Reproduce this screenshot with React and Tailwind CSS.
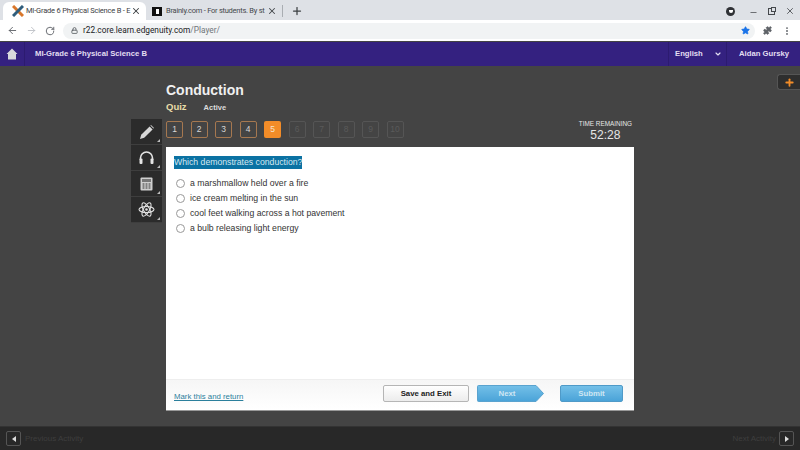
import { ChevronDown, Plus, X, ArrowLeft, ArrowRight, RotateCw, Lock, Star, Puzzle, MoreVertical, Minus } from "lucide-react";

const answers = [
  "a marshmallow held over a fire",
  "ice cream melting in the sun",
  "cool feet walking across a hot pavement",
  "a bulb releasing light energy",
];

function EdgeLogo() {
  return (
    <svg width="12" height="12" viewBox="0 0 12 12" className="mr-[2px] shrink-0">
      <path d="M1 1l10 10" stroke="#d9772b" strokeWidth="3" />
      <path d="M11 1L1 11" stroke="#2f5d7c" strokeWidth="3" />
    </svg>
  );
}

function BrowserBar() {
  return (
    <div className="font-['Roboto',sans-serif]">
      <div className="flex h-[20px] items-end bg-[#dee1e6] pl-[3px]">
        <div className="flex h-[18px] w-[143px] items-center rounded-t-[6px] bg-white pl-[9px] pr-[5px] text-[#3c4043]">
          <EdgeLogo />
          <span className="min-w-0 flex-1 whitespace-nowrap text-[7.5px] tracking-[-0.2px]">MI-Grade 6 Physical Science B - E</span>
          <X size={10} strokeWidth={2.5} className="shrink-0" />
        </div>
        <div className="flex h-[18px] w-[136px] items-center pl-[6px] pr-[5px] text-[#45484c]">
          <div className="mr-[4px] flex h-[9px] w-[10px] shrink-0 items-center justify-center bg-[#111111]">
            <div className="h-[5px] w-[3px] bg-white" />
          </div>
          <span className="min-w-0 flex-1 whitespace-nowrap text-[7.5px] tracking-[-0.25px]">Brainly.com - For students. By st</span>
          <X size={10} strokeWidth={2.5} className="shrink-0" />
        </div>
        <div className="mb-[3px] h-[12px] w-px bg-[#a9adb2]" />
        <Plus size={12} strokeWidth={2.5} className="mb-[3px] ml-[8px] text-[#3c4043]" />
        <div className="mb-[3px] ml-auto flex items-center text-[#45484c]">
          <div className="flex h-[9px] w-[9px] items-center justify-center rounded-full bg-[#303236]">
            <div className="h-[3px] w-[4px] rounded-b-full bg-white" />
          </div>
          <Minus size={9} strokeWidth={2} className="ml-[14px] mt-[3px]" />
          <div className="relative ml-[10px] h-[7px] w-[7px] border border-[#45484c]">
            <div className="absolute -right-[2px] -top-[2px] h-[5px] w-[5px] border border-[#45484c] bg-[#dee1e6]" />
          </div>
          <X size={10} strokeWidth={2} className="ml-[10px] mr-[5px]" />
        </div>
      </div>
      <div className="flex h-[21px] items-center bg-white">
        <ArrowLeft size={11} strokeWidth={2} className="ml-[7px] text-[#5f6368]" />
        <ArrowRight size={11} strokeWidth={2} className="ml-[8px] text-[#bdc1c6]" />
        <RotateCw size={10} strokeWidth={2.2} className="ml-[8px] text-[#5f6368]" />
        <div className="ml-[8px] flex h-[16px] w-[692px] items-center rounded-full bg-[#f1f3f4] pl-[8px] pr-[5px]">
          <Lock size={7} strokeWidth={3} className="text-[#5f6368]" />
          <span className="ml-[5px] text-[8.3px] leading-none text-[#202124]">
            r22.core.learn.edgenuity.com<span className="text-[#70757a]">/Player/</span>
          </span>
          <Star size={9} fill="#1a73e8" strokeWidth={2} className="ml-auto text-[#1a73e8]" />
        </div>
        <Puzzle size={9} fill="#5f6368" strokeWidth={2} className="ml-[8px] text-[#5f6368]" />
        <MoreVertical size={10} strokeWidth={2.5} className="ml-[10px] text-[#5f6368]" />
      </div>
    </div>
  );
}

function TopNav() {
  return (
    <div className="mt-[1px] flex h-[24px] items-center bg-[#342180] text-[7.7px] font-bold text-[#e3dff2]">
      <div className="flex h-full w-[25px] items-center justify-center border-r border-[#2c1b70]">
        <svg width="12" height="12" viewBox="0 0 12 12" fill="#d8d8dc">
          <path d="M6 .5L.5 6H2v5.5h8V6h1.5z" />
        </svg>
      </div>
      <span className="ml-[10px]">MI-Grade 6 Physical Science B</span>
      <div className="ml-auto flex h-full w-[44px] items-center border-l border-[#2c1b70] pl-[6px]">English</div>
      <div className="flex h-full w-[15px] items-center border-r border-[#2c1b70] pl-[2px]">
        <ChevronDown size={8} strokeWidth={3.5} />
      </div>
      <span className="ml-[12px] mr-[11px]">Aidan Gursky</span>
    </div>
  );
}

function ToolButton({ children }) {
  return (
    <div className="relative flex h-[26px] w-[31px] items-center justify-center border-b border-[#3e3e3e] bg-[#2b2b2b] text-[#d4d4d4]">
      {children}
      <div className="absolute bottom-[2px] right-[2px] h-0 w-0 border-b-[3px] border-l-[3px] border-b-[#bdbdbd] border-l-transparent" />
    </div>
  );
}

function ToolRail() {
  return (
    <div className="mr-[4px] mt-[53px] flex w-[31px] flex-col">
      <ToolButton>
        <svg width="16" height="16" viewBox="0 0 16 16" fill="#d8d8d8">
          <path d="M1 15l1.2-4.2L10.6 2.4l3 3-8.4 8.4z" />
          <path d="M11.4 1.6l.6-.6 3 3-.6.6z" />
        </svg>
      </ToolButton>
      <ToolButton>
        <svg width="17" height="15" viewBox="0 0 17 15" fill="none">
          <path d="M2.5 10V8a6 6 0 0112 0v2" stroke="#e4e4e4" strokeWidth="1.6" />
          <rect x="1.5" y="8.5" width="3" height="5.5" rx="1" fill="#e4e4e4" />
          <rect x="12.5" y="8.5" width="3" height="5.5" rx="1" fill="#e4e4e4" />
        </svg>
      </ToolButton>
      <ToolButton>
        <svg width="13" height="14" viewBox="0 0 13 14">
          <rect x=".5" y=".5" width="12" height="13" rx="1" fill="#cfcfcf" />
          <rect x="2" y="2" width="9" height="3" fill="#777777" />
          <path d="M2 7h9M2 9h9M2 11h9M3.5 6v6M6.5 6v6M9.5 6v6" stroke="#777777" strokeWidth=".8" />
        </svg>
      </ToolButton>
      <ToolButton>
        <svg width="17" height="17" viewBox="0 0 17 17" fill="none" stroke="#e0e0e0" strokeWidth="1.1">
          <ellipse cx="8.5" cy="8.5" rx="7.5" ry="3" />
          <ellipse cx="8.5" cy="8.5" rx="7.5" ry="3" transform="rotate(60 8.5 8.5)" />
          <ellipse cx="8.5" cy="8.5" rx="7.5" ry="3" transform="rotate(120 8.5 8.5)" />
          <circle cx="8.5" cy="8.5" r="1.3" fill="#e0e0e0" stroke="none" />
        </svg>
      </ToolButton>
    </div>
  );
}

function QuestionTabs() {
  const tabs = [1, 2, 3, 4, 5, 6, 7, 8, 9, 10];
  return (
    <div className="flex gap-[7.5px]">
      {tabs.map((n) => {
        if (n === 5) {
          return (
            <div key={n} className="flex h-[17px] w-[17px] items-center justify-center rounded-[2px] bg-[#f28c28] text-[8.5px] text-[#f6e2c8]">
              {n}
            </div>
          );
        }
        if (n > 5) {
          return (
            <div key={n} className="flex h-[17px] w-[17px] items-center justify-center rounded-[2px] border border-[#555555] text-[8.5px] text-[#5a5a5a]">
              {n}
            </div>
          );
        }
        return (
          <div key={n} className="flex h-[17px] w-[17px] items-center justify-center rounded-[2px] border border-[#a67850] text-[8.5px] text-[#d8d8d8]">
            {n}
          </div>
        );
      })}
    </div>
  );
}

function QuizCard() {
  return (
    <div className="flex h-[264px] flex-col border-b border-[#999999] bg-white">
      <div className="flex-1 pl-[8px] pt-[9px] text-[#333333]">
        <div className="w-fit bg-[#0b72a3] py-[1px] text-[8.7px] leading-[11px] text-[#d5e8f2]">Which demonstrates conduction?</div>
        <div className="mt-[7px] flex flex-col">
          {answers.map((answer) => (
            <div key={answer} className="flex h-[15px] items-center">
              <div className="ml-[2px] h-[9px] w-[9px] rounded-full border border-[#999999]" />
              <span className="ml-[5px] text-[8.7px]">{answer}</span>
            </div>
          ))}
        </div>
      </div>
      <div className="flex h-[31px] items-center border-t border-[#eeeeee] bg-gradient-to-b from-[#f6f6f6] to-white pb-[3px] pl-[8px] text-[7.8px]">
        <span className="mt-[7px] text-[#2b7f9c] underline">Mark this and return</span>
        <div className="ml-auto flex h-[17px] w-[86px] items-center justify-center rounded-[2px] border border-[#b5b5b5] bg-gradient-to-b from-white to-[#ececec] font-bold text-[#222222]">
          Save and Exit
        </div>
        <div className="relative ml-[8px] flex h-[17px] w-[67px] items-center justify-center">
          <svg width="67" height="17" viewBox="0 0 67 17" className="absolute left-0 top-0">
            <defs>
              <linearGradient id="nextFill" x1="0" y1="0" x2="0" y2="1">
                <stop offset="0" stopColor="#74c0e8" />
                <stop offset="1" stopColor="#4aa3d8" />
              </linearGradient>
            </defs>
            <path d="M1.5.5H59L66.5 8.5 59 16.5H1.5a1 1 0 01-1-1V1.5a1 1 0 011-1z" fill="url(#nextFill)" stroke="#5aa3cf" />
          </svg>
          <span className="relative -ml-[7px] font-bold text-[#cfe6f3]">Next</span>
        </div>
        <div className="ml-[16px] mr-[11px] flex h-[17px] w-[63px] items-center justify-center rounded-[2px] border border-[#4f9ac8] bg-gradient-to-b from-[#74c0e8] to-[#4aa3d8] font-bold text-[#cfe6f3]">
          Submit
        </div>
      </div>
    </div>
  );
}

function ActivityFooter() {
  return (
    <div className="flex h-[24px] items-center justify-between border-t border-[#333333] bg-[#282828] px-[6px] text-[8px] text-[#3e3e3e]">
      <div className="flex items-center">
        <div className="flex h-[15px] w-[15px] items-center justify-center rounded-[2px] border border-[#555555]">
          <div className="h-0 w-0 border-y-[3px] border-r-[4px] border-y-transparent border-r-[#dddddd]" />
        </div>
        <span className="ml-[4px]">Previous Activity</span>
      </div>
      <div className="flex items-center">
        <span className="mr-[3px]">Next Activity</span>
        <div className="flex h-[15px] w-[15px] items-center justify-center rounded-[2px] border border-[#555555]">
          <div className="h-0 w-0 border-y-[3px] border-l-[4px] border-y-transparent border-l-[#dddddd]" />
        </div>
      </div>
    </div>
  );
}

export default function App() {
  return (
    <div className="flex h-[450px] w-[800px] flex-col overflow-hidden bg-[#444444] font-['Liberation_Sans',sans-serif]">
      <BrowserBar />
      <TopNav />
      <div className="relative flex flex-1 pl-[131px]">
        <ToolRail />
        <div className="w-[468px]">
          <h1 className="mt-[15px] text-[14px] font-bold leading-[18px] text-[#f0f0f0]">Conduction</h1>
          <div className="mt-[2px] flex h-[13px] items-center">
            <span className="text-[9.5px] font-bold text-[#e8dca8]">Quiz</span>
            <span className="ml-[17px] text-[7.5px] font-bold text-[#dddddd]">Active</span>
          </div>
          <div className="mt-[3px] flex h-[30px] items-start justify-between">
            <div className="mt-[4px]">
              <QuestionTabs />
            </div>
            <div className="mr-[2px] mt-[3px] text-center text-[#e6e6e6]">
              <div className="text-[6.4px] leading-[8px]">TIME REMAINING</div>
              <div className="text-[12px] leading-[14px]">52:28</div>
            </div>
          </div>
          <QuizCard />
        </div>
        <div className="absolute right-0 top-[8px] flex h-[16px] w-[23px] items-center justify-center rounded-l-[3px] border border-r-0 border-[#555555] bg-[#2e2e2e]">
          <Plus size={11} strokeWidth={4} className="text-[#f28c28]" />
        </div>
      </div>
      <ActivityFooter />
    </div>
  );
}
